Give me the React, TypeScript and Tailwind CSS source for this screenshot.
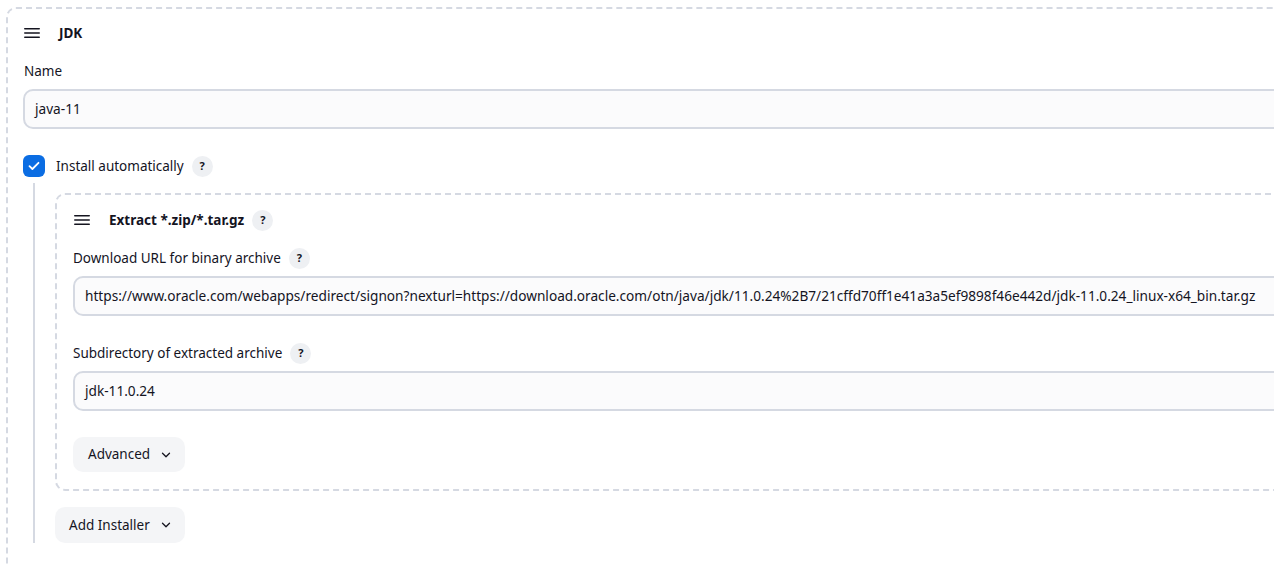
import { ChevronDown } from "lucide-react";

const FONT = "font-['Noto_Sans',_'Open_Sans',_sans-serif]";

function Grip() {
  return (
    <svg width="16" height="10" viewBox="0 0 16 10" className="shrink-0">
      <rect x="0" y="0" width="16" height="1.6" rx="0.8" fill="#14141f" />
      <rect x="0" y="4.2" width="16" height="1.6" rx="0.8" fill="#14141f" />
      <rect x="0" y="8.4" width="16" height="1.6" rx="0.8" fill="#14141f" />
    </svg>
  );
}

function Help() {
  return (
    <span className="ml-[8px] inline-flex h-[21px] w-[21px] shrink-0 items-center justify-center rounded-full bg-[#eef0f3] text-[11px] font-bold text-[#14141f]">
      ?
    </span>
  );
}

function Field({ value }: { value: string }) {
  return (
    <div className="flex h-[40px] items-center rounded-[10px] border-2 border-[#d5d9e2] bg-[#fbfbfc] pl-[10px] text-[13.65px] text-[#14141f] whitespace-nowrap">
      {value}
    </div>
  );
}

export default function App() {
  return (
    <div className={`${FONT} h-[566px] w-[1274px] overflow-hidden bg-white text-[#14141f]`}>
      <div className="ml-[6px] mt-[7px] w-[1340px] rounded-[10px] border-2 border-dashed border-[#d5d9e2] px-[15px] pt-[12px] pb-[40px]">
        <div className="flex h-[24px] items-center gap-[19px] pl-[1px]">
          <Grip />
          <span className="text-[13.5px] font-bold">JDK</span>
        </div>

        <div className="mt-[16px] h-[20px] pl-[1px] text-[13.5px] leading-[20px]">Name</div>
        <div className="mt-[8px]">
          <Field value="java-11" />
        </div>

        <div className="mt-[26px] flex h-[22px] items-center">
          <span className="flex h-[22px] w-[22px] items-center justify-center rounded-[6px] bg-[#0b6de3]">
            <svg width="12" height="10" viewBox="0 0 12 10" fill="none">
              <path d="M1.5 5.2 4.4 8 10.5 1.8" stroke="white" strokeWidth="1.8" strokeLinecap="round" strokeLinejoin="round" />
            </svg>
          </span>
          <span className="ml-[11px] text-[13.5px]">Install automatically</span>
          <Help />
        </div>

        <div className="mt-[6px] ml-[10px] border-l-2 border-[#d5d9e2] pl-[20px] pt-[10px]">
          <div className="rounded-[10px] border-2 border-dashed border-[#d5d9e2] pl-[16px] pr-[15px] pt-[13px] pb-[17px]">
            <div className="flex h-[24px] items-center pl-[1px]">
              <Grip />
              <span className="ml-[19px] text-[13.5px] font-bold">Extract *.zip/*.tar.gz</span>
              <Help />
            </div>

            <div className="mt-[16px] flex h-[20px] items-center text-[13.5px]">
              Download URL for binary archive
              <Help />
            </div>
            <div className="mt-[8px]">
              <Field value="https://www.oracle.com/webapps/redirect/signon?nexturl=https://download.oracle.com/otn/java/jdk/11.0.24%2B7/21cffd70ff1e41a3a5ef9898f46e442d/jdk-11.0.24_linux-x64_bin.tar.gz" />
            </div>

            <div className="mt-[27px] flex h-[20px] items-center text-[13.5px]">
              Subdirectory of extracted archive
              <Help />
            </div>
            <div className="mt-[8px]">
              <Field value="jdk-11.0.24" />
            </div>

            <button className="mt-[26px] flex h-[35px] items-center gap-[9px] rounded-[10px] bg-[#f4f5f7] pl-[15px] pr-[12px] text-[13.5px]">
              Advanced
              <ChevronDown size={14} strokeWidth={2.2} />
            </button>
          </div>

          <button className="mt-[16px] flex h-[36px] items-center gap-[9px] rounded-[10px] bg-[#f4f5f7] pl-[14px] pr-[12px] text-[13.5px]">
            Add Installer
            <ChevronDown size={14} strokeWidth={2.2} />
          </button>
        </div>
      </div>
    </div>
  );
}
